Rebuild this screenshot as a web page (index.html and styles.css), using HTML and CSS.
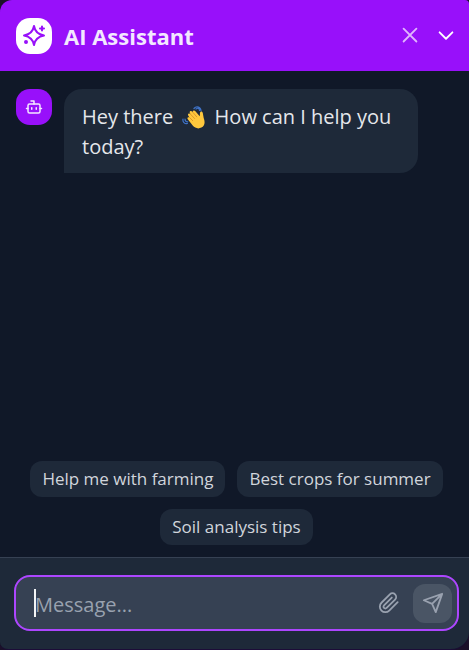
FILE: index.html
```html
<!DOCTYPE html>
<html lang="en">
<head>
<meta charset="utf-8">
<meta name="viewport" content="width=device-width, initial-scale=1">
<title>AI Assistant</title>
<link rel="stylesheet" href="styles.css">
</head>
<body>
<main class="chat">
  <header class="header">
    <span class="badge badge-light">
      <svg class="icon-sparkle" viewBox="0 0 24 24" aria-hidden="true"><path d="M12 2c.9 5.600 3.600 8.300 10 9.500-6.400 1.200-9.100 4-10 9.500-.9-5.500-3.600-8.300-10-9.500 6.400-1.200 9.100-3.900 10-9.500z"/><path d="M20 2.500v4M22 4.500h-4"/><circle cx="4" cy="18" r="1"/></svg>
    </span>
    <h1 class="title">AI Assistant</h1>
    <button class="icon-button close" type="button" aria-label="Close"><svg viewBox="0 0 24 24"><path d="M5 4l14 14M19 4l-14 14"/></svg></button>
    <button class="icon-button" type="button" aria-label="Minimize"><svg viewBox="0 0 24 24"><path d="M5 8l7 7 7-7"/></svg></button>
  </header>
  <section class="messages">
    <article class="message">
      <span class="badge badge-purple">
        <svg class="icon-bot" viewBox="0 0 24 24" aria-hidden="true"><path d="M12 8V4H8"/><rect x="4" y="8" width="16" height="12" rx="2"/><path d="M2 14h2M20 14h2M15 13v2M9 13v2"/></svg>
      </span>
      <p class="bubble">Hey there <svg class="wave" viewBox="0 0 24 24" role="img" aria-label="waving hand"><g fill="none" stroke="#3f73c8" stroke-width="1.200" stroke-linecap="round"><path d="M12 3.500c2.500-3 7-1.500 7 2.500M14 4c2-1.500 3.500-.5 3.500 1.500M1 14c-.5 3 1.500 5 4.500 4.500M3 14c0 1.800 1 2.800 2.700 2.800"/></g><path fill="#ffc83d" d="M6 14.500c-1.500-1.500.2-3.200 1.700-1.800L6.500 11c-1.500-1.800.7-3.300 2.100-1.700L8 8.200c-1.200-1.800 1-3.200 2.300-1.600l.7.900c-.8-1.700 1.200-2.700 2.400-1.200l4.300 5c.4-1.500-.1-2.800.5-4 .7-1.400 2.400-.8 2.600.8l.9 4.900c1.800 4.500.8 8-2.300 9.600-3.300 1.700-6.400.5-8.700-2z"/><path fill="none" stroke="#d48a23" stroke-width=".8" stroke-linecap="round" d="M7.700 12.700l3 3M8.600 9.300l4 4.200M11 7.500l3.700 4.300"/></svg> How can I help you today?</p>
    </article>
  </section>
  <nav class="suggestions" aria-label="Suggestions">
    <button class="chip" type="button">Help me with farming</button>
    <button class="chip" type="button">Best crops for summer</button>
    <button class="chip" type="button">Soil analysis tips</button>
  </nav>
  <form class="composer">
    <div class="field">
      <span class="caret" aria-hidden="true"></span>
      <input class="input" type="text" placeholder="Message..." aria-label="Message">
      <button class="attach" type="button" aria-label="Attach file"><svg viewBox="0 0 24 24"><path d="M21.440 11.050l-9.190 9.190a6 6 0 0 1-8.490-8.490l9.190-9.190a4 4 0 0 1 5.660 5.660l-9.200 9.190a2 2 0 0 1-2.830-2.830l8.490-8.480"/></svg></button>
      <button class="send" type="button" aria-label="Send"><svg viewBox="0 0 24 24"><path d="M22 2L11 13M22 2l-7 20-4-9-9-4z"/></svg></button>
    </div>
  </form>
</main>
</body>
</html>
```

FILE: styles.css
```css
* { box-sizing: border-box; }
body {
  margin: 0;
  background: #1b1029;
  font-family: "Segoe UI", "Open Sans", "Noto Sans", sans-serif;
}
button, input { font: inherit; border: 0; margin: 0; padding: 0; background: none; }
svg {
  display: block;
  fill: none;
  stroke: currentColor;
  stroke-width: 2;
  stroke-linecap: round;
  stroke-linejoin: round;
}
.chat {
  display: flex;
  flex-direction: column;
  min-height: 100vh;
  overflow: hidden;
  border-bottom: 1px solid #1c0c38;
  border-radius: 12px 4px 18px 8px;
  background: #101828;
}
.header {
  display: flex;
  align-items: center;
  height: 71px;
  padding: 0 12px 0 16px;
  background: #9810fa;
  color: #f3e8ff;
}
.badge {
  display: flex;
  flex: none;
  align-items: center;
  justify-content: center;
  width: 36px;
  height: 36px;
  margin-right: 12px;
  border-radius: 14px;
}
.badge-light { background: #fff; color: #9810fa; }
.badge-purple { background: #9810fa; color: #f3e8ff; }
.icon-sparkle { width: 24px; height: 24px; stroke-width: 2; }
.icon-bot { width: 18px; height: 18px; }
.title {
  flex: 1;
  margin: 0;
  font-size: 22px;
  line-height: 32px;
  font-weight: 700;
}
.icon-button { margin-left: 14px; color: #fff; }
.icon-button svg { width: 22px; height: 22px; }
.close { color: #e0b5fd; }
.messages { flex: 1; padding: 18px 16px; }
.message { display: flex; align-items: flex-start; }
.bubble {
  max-width: 354px;
  margin: 0;
  padding: 13px 18px 11px;
  border-radius: 18px 18px 18px 0;
  background: #1e2939;
  color: #e5e7eb;
  font-size: 20px;
  line-height: 30px;
}
.wave {
  display: inline-block;
  width: 24px;
  height: 24px;
  margin: 0 3px 0 4px;
  vertical-align: -5px;
  stroke: none;
}
.suggestions {
  display: flex;
  flex-wrap: wrap;
  justify-content: center;
  gap: 12px;
  padding: 0 12px 12px 16px;
}
.chip {
  height: 36px;
  padding: 0 12px;
  border-radius: 12px;
  background: #1e2939;
  color: #d1d5dc;
  font-size: 17px;
  line-height: 36px;
}
.composer {
  padding: 17px 10px 18px 14px;
  border-top: 1px solid #364153;
  background: #1e2939;
}
.field {
  position: relative;
  display: flex;
  align-items: center;
  height: 56px;
  padding: 0 5px 0 19px;
  border: 2px solid #ad46ff;
  border-radius: 16px;
  background: #364153;
}
.caret {
  position: absolute;
  left: 18px;
  width: 2px;
  height: 28px;
  background: #f3f4f6;
}
.input {
  flex: 1;
  min-width: 0;
  height: 36px;
  padding-top: 2px;
  color: #f3f4f6;
  font-size: 20px;
  outline: 0;
}
.input::placeholder { color: #99a1af; opacity: 1; }
.attach { margin-right: 13px; color: #99a1af; }
.attach svg { width: 22px; height: 22px; }
.send {
  display: flex;
  align-items: center;
  justify-content: center;
  width: 39px;
  height: 39px;
  border-radius: 12px;
  background: #4a5565;
  color: #99a1af;
}
.send svg { width: 22px; height: 22px; }
```
